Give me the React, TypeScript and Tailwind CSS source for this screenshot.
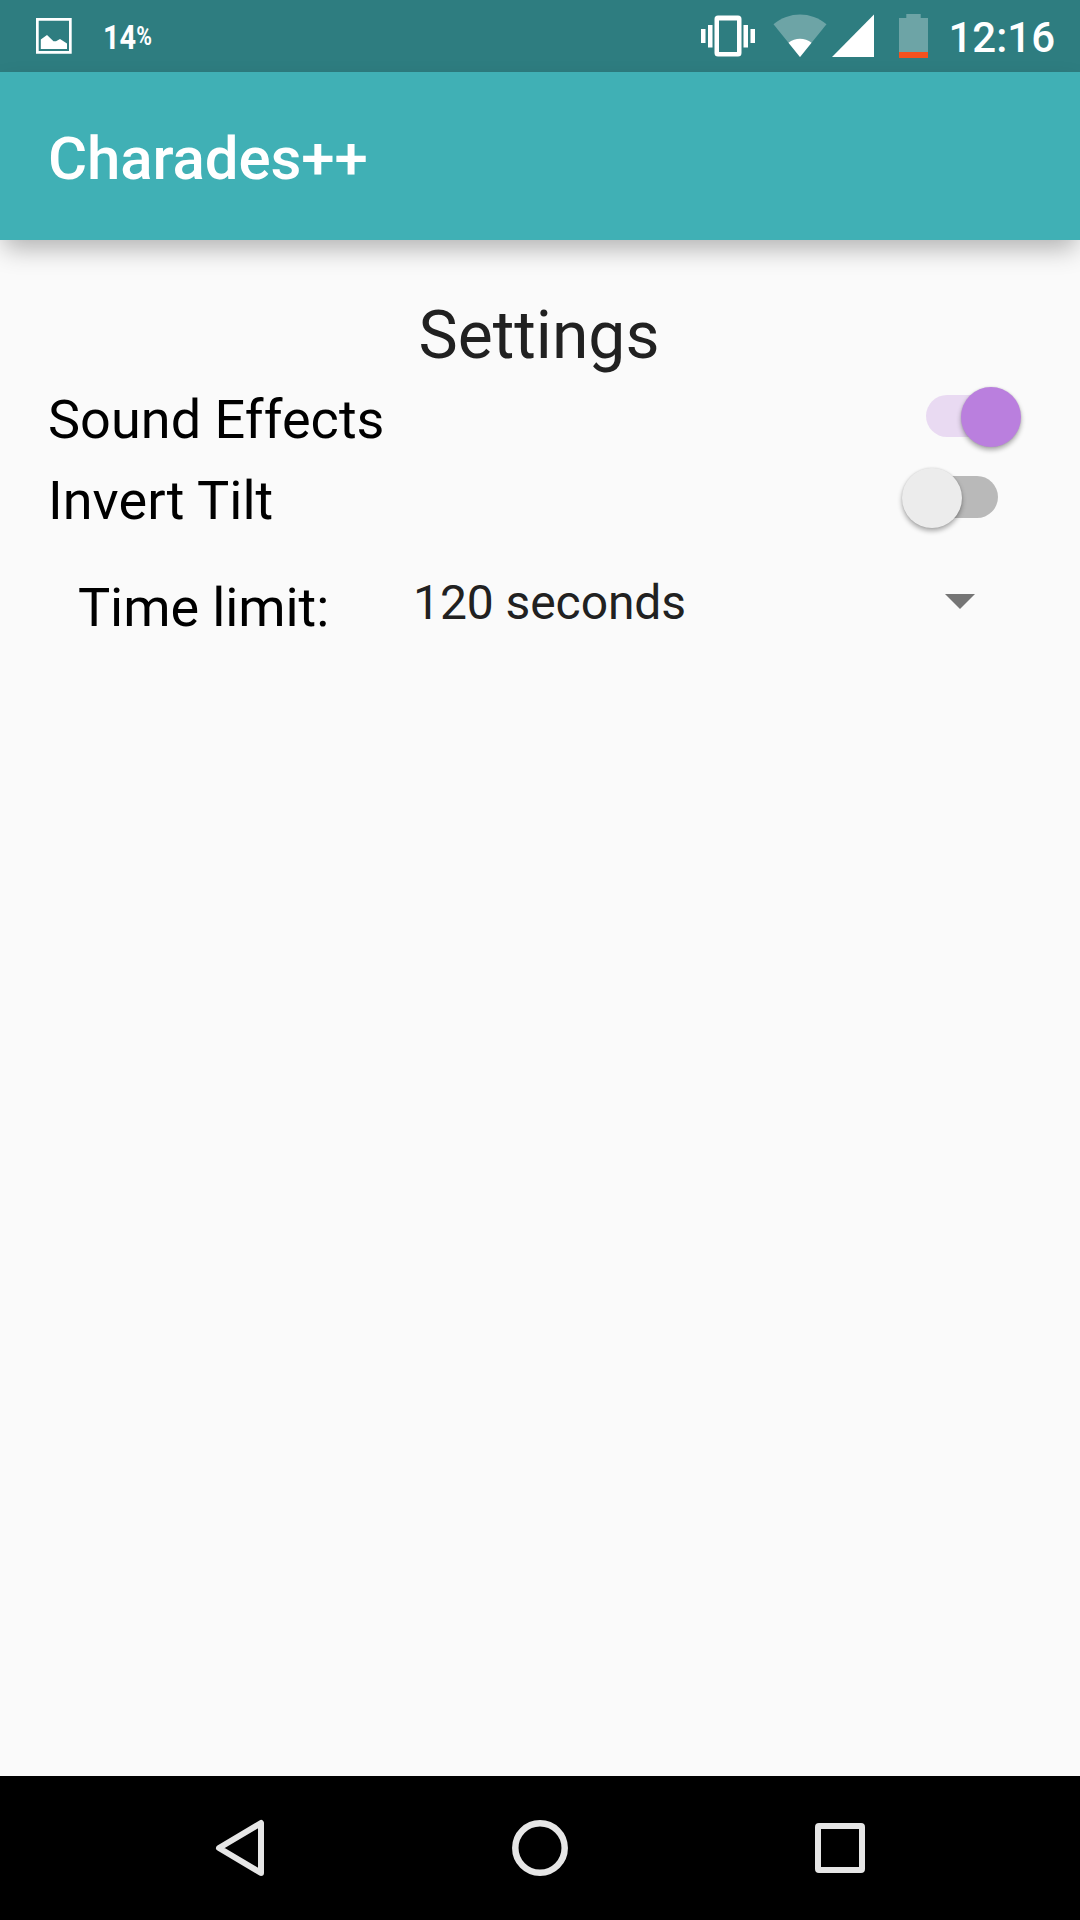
type SwitchProps = { label: string; on: boolean };

function PictureIcon() {
  return (
    <svg width="36" height="36" viewBox="0 0 36 36" fill="white">
      <path fillRule="evenodd" d="M0 0H35.7V35.7H0ZM2.7 2.7V33H33V2.7Z" />
      <path d="M4.8 31V21.5L11 17L17.5 23.3H20L24 21L31 25.5V31Z" />
    </svg>
  );
}

function VibrateIcon() {
  return (
    <svg width="54" height="42" viewBox="0 0 54 42" fill="white">
      <path d="M0 14h4.5v14H0zM7 10h4.5v22.5H7zM42.5 10H47v22.5h-4.5zM49.5 14H54v14h-4.5z" />
      <path
        fillRule="evenodd"
        d="M17 .5H37a3.5 3.5 0 0 1 3.5 3.5V38a3.5 3.5 0 0 1-3.5 3.500H17A3.500 3.500 0 0 1 13.500 38V4A3.500 3.500 0 0 1 17 .5ZM18 5.500V37H36V5.500Z"
      />
    </svg>
  );
}

function WifiIcon() {
  return (
    <svg width="54" height="44" viewBox="0 0 54 44" fill="white">
      <path d="M.5 10.200C16 -2.900 38 -2.900 53.500 10.200L27 43Z" fillOpacity=".3" />
      <path d="M15.500 28.700C22 23.400 32 23.400 38.500 28.700L27 43Z" />
    </svg>
  );
}

function SignalIcon() {
  return (
    <svg width="42" height="43" viewBox="0 0 42 43" fill="white">
      <path d="M0 43L42 .5V43Z" />
    </svg>
  );
}

function BatteryIcon() {
  return (
    <svg width="29" height="44" viewBox="0 0 29 44">
      <path d="M0 4H7.300V0H21.700V4H29V38H0Z" fill="white" fillOpacity=".3" />
      <path d="M0 38H29V44H0Z" fill="#f4511e" />
    </svg>
  );
}

function StatusBar() {
  return (
    <div className="flex h-[72px] shrink-0 items-start bg-[#2e7d80] text-white">
      <div className="ml-[36px] mt-[18px]">
        <PictureIcon />
      </div>
      <div className="ml-[30.5px] mt-[16px] flex w-[50px] origin-left scale-x-[0.85] items-start font-bold">
        <span className="text-[34px] leading-[42px]">14</span>
        <span className="text-[25px] leading-[42px]">%</span>
      </div>
      <div className="ml-auto mr-[25px] flex items-start">
        <div className="mt-[15px]">
          <VibrateIcon />
        </div>
        <div className="ml-[18px] mt-[14px]">
          <WifiIcon />
        </div>
        <div className="ml-[5px] mt-[14px]">
          <SignalIcon />
        </div>
        <div className="ml-[25px] mt-[14px]">
          <BatteryIcon />
        </div>
        <span className="ml-[20px] mt-[17px] text-[42px] font-medium leading-[42px]">12:16</span>
      </div>
    </div>
  );
}

function Switch({ on }: { on: boolean }) {
  return (
    <div className={on ? "relative mb-[1px] h-[42px] w-[72px] rounded-full bg-[#e9daf2]" : "relative mb-[1px] h-[42px] w-[72px] rounded-full bg-[#b9b9b9]"}>
      <div
        className={
          on
            ? "absolute -top-[8.5px] left-[35.2px] size-[60px] rounded-full bg-[#ba7fde] shadow-[0_3px_5px_rgba(0,0,0,0.32),0_0_2px_rgba(0,0,0,0.12)]"
            : "absolute -top-[8.5px] -left-[23.6px] size-[60px] rounded-full bg-[#ececec] shadow-[0_3px_5px_rgba(0,0,0,0.32),0_0_2px_rgba(0,0,0,0.12)]"
        }
      />
    </div>
  );
}

function SwitchRow({ label, on }: SwitchProps) {
  return (
    <div className="flex h-[81px] items-center justify-between pl-[48px] pr-[82px]">
      <span className="pt-[6px] text-[54px] leading-[64px] tracking-[0.05px]">{label}</span>
      <Switch on={on} />
    </div>
  );
}

function NavBar() {
  return (
    <div className="flex h-[144px] shrink-0 items-center justify-between bg-black px-[215px]">
      <svg width="50" height="58" viewBox="0 0 50 58" fill="none" stroke="#e6e6e6" strokeWidth="6" strokeLinejoin="round">
        <path d="M4 29L46 4V54Z" />
      </svg>
      <svg width="56" height="56" viewBox="0 0 56 56" fill="none" stroke="#e6e6e6" strokeWidth="6.500">
        <circle cx="28" cy="28" r="24.700" />
      </svg>
      <svg width="50" height="50" viewBox="0 0 50 50" fill="#e6e6e6">
        <path fillRule="evenodd" d="M4 0H46A4 4 0 0 1 50 4V46A4 4 0 0 1 46 50H4A4 4 0 0 1 0 46V4A4 4 0 0 1 4 0ZM6 6V44H44V6Z" />
      </svg>
    </div>
  );
}

export default function App() {
  return (
    <div className="flex h-[1920px] w-[1080px] flex-col overflow-hidden bg-[#fafafa] font-['Roboto',sans-serif] text-black">
      <StatusBar />
      <header className="z-10 flex h-[168px] shrink-0 items-center bg-[#40b0b5] pl-[48px] pt-[5px] shadow-[0_12px_24px_-4px_rgba(0,0,0,0.3)]">
        <h1 className="text-[60px] font-medium leading-[71px] tracking-[-0.1px] text-white">Charades++</h1>
      </header>
      <main className="flex-1 pt-[59px]">
        <h2 className="mb-[4px] pr-[2px] text-center text-[66px] leading-[73px] text-[#212121]">Settings</h2>
        <SwitchRow label="Sound Effects" on={true} />
        <SwitchRow label="Invert Tilt" on={false} />
        <div className="mt-[25px] flex h-[80px] items-center pl-[78px] pr-[105px]">
          <span className="w-[335px] pt-[9px] text-[54px] leading-[64px] tracking-[-0.1px]">Time limit:</span>
          <span className="text-[48px] leading-[56px] tracking-[-0.08px] text-[#212121]">120 seconds</span>
          <svg className="ml-auto mt-[-3px]" width="30" height="15" viewBox="0 0 30 15" fill="#757575">
            <path d="M0 0H30L15 15Z" />
          </svg>
        </div>
      </main>
      <NavBar />
    </div>
  );
}
